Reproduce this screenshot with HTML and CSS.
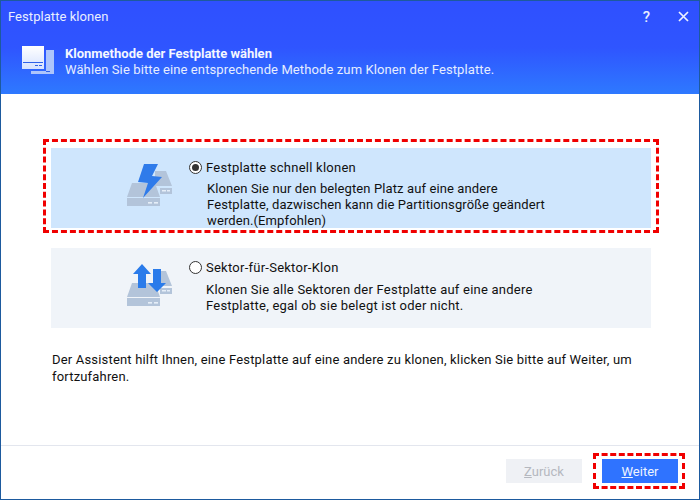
FILE: index.html
```html
<!DOCTYPE html>
<html lang="de">
<head>
<meta charset="utf-8">
<title>Festplatte klonen</title>
<link rel="stylesheet" href="styles.css">
</head>
<body>
<div class="window">
  <header class="head">
    <div class="titlebar">
      <span class="title">Festplatte klonen</span>
      <span class="controls">
        <span class="help">?</span>
        <svg class="close" width="11" height="11" viewBox="0 0 11 11"><path d="M1 1l9 9M10 1l-9 9" stroke="#eef2ff" stroke-width="1.7" fill="none"/></svg>
      </span>
    </div>
    <div class="banner">
      <svg class="banner-icon" width="34" height="34" viewBox="0 0 34 34">
        <defs><linearGradient id="bg1" x1="0" y1="0" x2="0" y2="1"><stop offset="0" stop-color="#ffffff"/><stop offset="1" stop-color="#d6e2ff"/></linearGradient></defs>
        <rect x="25" y="6" width="8" height="24" fill="#adc5fb"/>
        <rect x="10" y="27" width="23" height="3" fill="#adc5fb"/>
        <rect x="1" y="2" width="22" height="23" fill="url(#bg1)"/>
        <rect x="2" y="18" width="20" height="1" fill="#2f62e8"/>
        <rect x="14" y="21" width="3" height="1" fill="#2f62e8"/>
        <rect x="18" y="21" width="3" height="1" fill="#2f62e8"/>
        <rect x="25" y="27" width="4" height="1" fill="#2f62e8"/>
      </svg>
      <div class="banner-text">
        <div class="banner-title">Klonmethode der Festplatte wählen</div>
        <div class="banner-sub">Wählen Sie bitte eine entsprechende Methode zum Klonen der Festplatte.</div>
      </div>
    </div>
  </header>
  <main class="content">
    <section class="option option-active marked">
      <svg class="option-icon" width="50" height="46" viewBox="0 0 50 46">
        <path d="M28 9h11l6 15H28z" fill="#b3c4da"/>
        <rect x="33" y="26" width="12" height="6" fill="#b3c4da"/>
        <rect x="35" y="28" width="4" height="1.5" fill="#e6eef8"/>
        <rect x="40" y="28" width="3" height="1.5" fill="#e6eef8"/>
        <path d="M5 21h23l5 14H0z" fill="#b3c4da"/>
        <rect x="0" y="36" width="33" height="8" fill="#b3c4da"/>
        <rect x="21" y="40" width="4" height="1.6" fill="#e6eef8"/>
        <rect x="27" y="40" width="4" height="1.6" fill="#e6eef8"/>
        <path d="M17 2h14l-6 12 10 1-19 21 5-15-10-1z" fill="#2f7bea"/>
      </svg>
      <div class="option-body">
        <div class="radio-row"><span class="radio radio-on"></span><span>Festplatte schnell klonen</span></div>
        <p class="desc desc-active">Klonen Sie nur den belegten Platz auf eine andere<br>Festplatte, dazwischen kann die Partitionsgröße geändert<br>werden.(Empfohlen)</p>
      </div>
    </section>
    <section class="option option-plain">
      <svg class="option-icon" width="50" height="46" viewBox="0 0 50 46">
        <path d="M28 9h11l6 15H28z" fill="#b3c4da"/>
        <rect x="33" y="26" width="12" height="6" fill="#b3c4da"/>
        <rect x="35" y="28" width="4" height="1.5" fill="#e6eef8"/>
        <rect x="40" y="28" width="3" height="1.5" fill="#e6eef8"/>
        <path d="M5 21h23l5 14H0z" fill="#b3c4da"/>
        <rect x="0" y="36" width="33" height="8" fill="#b3c4da"/>
        <rect x="21" y="40" width="4" height="1.6" fill="#e6eef8"/>
        <rect x="27" y="40" width="4" height="1.6" fill="#e6eef8"/>
        <path d="M15 2l9 10h-5v14h-8V12H6z" fill="#2a7bea"/>
        <path d="M26 7h8v14h5l-9 9-9-9h5z" fill="#2a7bea"/>
      </svg>
      <div class="option-body">
        <div class="radio-row"><span class="radio"></span><span>Sektor-für-Sektor-Klon</span></div>
        <p class="desc desc-plain">Klonen Sie alle Sektoren der Festplatte auf eine andere<br>Festplatte, egal ob sie belegt ist oder nicht.</p>
      </div>
    </section>
    <p class="note">Der Assistent hilft Ihnen, eine Festplatte auf eine andere zu klonen, klicken Sie bitte auf Weiter, um fortzufahren.</p>
  </main>
  <footer class="foot">
    <button class="btn btn-off" type="button"><u>Z</u>urück</button>
    <button class="btn btn-on marked-btn" type="button"><u>W</u>eiter</button>
  </footer>
</div>
</body>
</html>
```
FILE: styles.css
```css
* { box-sizing: border-box; }
html, body { margin: 0; padding: 0; }
body { width: 700px; height: 500px; overflow: hidden; background: #fff; font-family: Roboto, "Noto Sans", sans-serif; font-size: 13px; color: #111; }
.window { width: 700px; height: 500px; display: flex; flex-direction: column; border: 1px solid #1d5a9e; }
.head { height: 93px; background: linear-gradient(180deg, #2f50ff 0%, #2f55ff 50%, #2e79ff 100%); color: #fff; display: flex; flex-direction: column; }
.titlebar { height: 31px; flex: none; display: flex; align-items: center; justify-content: space-between; padding: 0 10px 0 7px; color: #e9eeff; }
.title { letter-spacing: 0.06px; }
.controls { display: flex; align-items: center; gap: 28px; }
.help { font-size: 15px; font-weight: 500; }
.close { display: block; }
.banner { display: flex; align-items: center; gap: 10px; padding: 12px 0 0 20px; }
.banner-icon { flex: none; }
.banner-text { line-height: 16px; color: #e6edff; margin-top: 2px; }
.banner-title { font-weight: 700; color: #f4f7ff; }
.banner-sub { letter-spacing: 0.11px; }
.content { flex: 1; display: flex; flex-direction: column; gap: 20px; padding: 54px 48px 0 50px; }
.option { height: 80px; display: flex; align-items: flex-start; padding: 9px 0 0 76px; gap: 12px; position: relative; }
.option-active { background: #cfe6fd; }
.option-plain { background: #f0f4f9; }
.option-icon { margin-top: 5px; flex: none; }
.marked::after { content: ""; position: absolute; inset: -9px -8px -5px -8px; border: 3px dashed #f00000; pointer-events: none; }
.radio-row { display: flex; align-items: center; gap: 4px; height: 20px; letter-spacing: 0.25px; }
.radio { width: 13px; height: 13px; border: 1px solid #333; border-radius: 50%; background: #fff; display: inline-block; position: relative; flex: none; }
.radio-on::after { content: ""; position: absolute; inset: 2px; border-radius: 50%; background: #333; }
.desc { line-height: 16px; }
.desc-active { margin: 4px 0 0 18px; letter-spacing: 0.11px; }
.desc-plain { margin: 5px 0 0 17px; letter-spacing: 0.23px; }
.note { margin: 0; padding: 3px 0 0 1px; line-height: 17px; width: 600px; letter-spacing: 0.18px; }
.foot { height: 54px; flex: none; border-top: 1px solid #e3e6ee; display: flex; justify-content: flex-end; align-items: flex-start; gap: 20px; padding: 13px 21px 0 0; }
.btn { width: 76px; height: 24px; border: 0; padding: 0; font: inherit; }
.btn-off { background: #eff1f5; color: #b5b8bf; }
.btn-on { background: #2f73ff; color: #eef3ff; position: relative; }
.marked-btn::after { content: ""; position: absolute; inset: -6px -7px -6px -9px; border: 3px dashed #f00000; pointer-events: none; }
```
